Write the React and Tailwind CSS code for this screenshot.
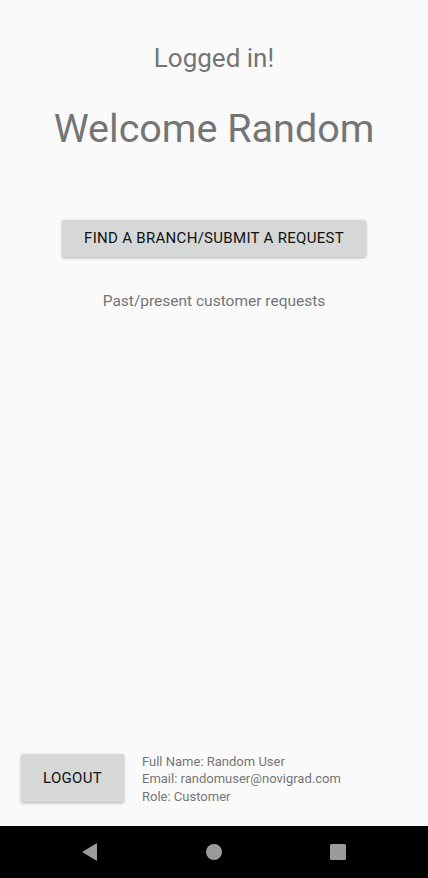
export default function App() {
  return (
    <div className="flex h-[878px] w-[428px] flex-col bg-[#fafafa] font-['Roboto',sans-serif]">
      <div className="flex flex-1 flex-col">
        <div className="flex flex-col items-center">
          <div className="mt-[41px] text-[26px] leading-[34px] text-[#757575]">Logged in!</div>
          <div className="mt-[28px] text-[39.5px] leading-[52px] text-[#757575]">Welcome Random</div>
          <button className="mt-[65px] h-[37px] w-[304px] rounded-[2px] bg-[#d6d7d7] text-[15px] font-normal tracking-[0.02em] text-[#111] shadow-[0_1px_3px_rgba(0,0,0,0.3)]">
            FIND A BRANCH/SUBMIT A REQUEST
          </button>
          <div className="mt-[34px] text-[15.5px] leading-[20px] text-[#757575]">Past/present customer requests</div>
        </div>
        <div className="mt-auto mb-[21px] flex items-center pl-[21px]">
          <button className="h-[48px] w-[103px] rounded-[2px] bg-[#d6d7d7] text-[15px] font-normal tracking-[0.02em] text-[#111] shadow-[0_1px_3px_rgba(0,0,0,0.3)]">
            LOGOUT
          </button>
          <div className="ml-[18px] mt-[2px] flex flex-col text-[13px] leading-[17.5px] text-[#757575]">
            <span>Full Name: Random User</span>
            <span>Email: randomuser@novigrad.com</span>
            <span>Role: Customer</span>
          </div>
        </div>
      </div>
      <div className="flex h-[52px] items-center justify-center gap-[106px] bg-black">
        <svg width="18" height="18" viewBox="0 0 18 18">
          <path d="M16 0 L1 9 L16 18 Z" fill="#9b9b9b" />
        </svg>
        <svg width="18" height="18" viewBox="0 0 18 18">
          <circle cx="9" cy="9" r="8" fill="#9b9b9b" />
        </svg>
        <svg width="18" height="18" viewBox="0 0 18 18">
          <rect x="1" y="1" width="16" height="16" rx="1.5" fill="#9b9b9b" />
        </svg>
      </div>
    </div>
  );
}
